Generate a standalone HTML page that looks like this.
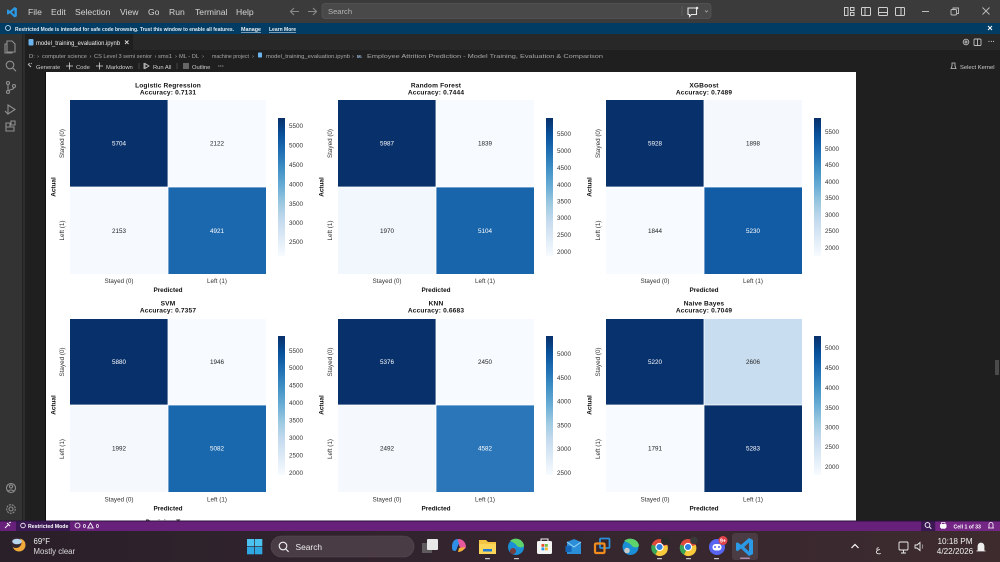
<!DOCTYPE html>
<html lang="en"><head><meta charset="utf-8"><title>model_training_evaluation.ipynb</title>
<style>
html,body{margin:0;padding:0;width:1000px;height:562px;overflow:hidden;background:#1f1f1f}
svg{display:block}
text{font-family:"Liberation Sans",sans-serif}
.t{font-size:6.6px;font-weight:700;fill:#111;text-anchor:middle;letter-spacing:.15px}
.l{font-size:6.3px;fill:#333;text-anchor:middle}
.b{font-size:6.4px;font-weight:700;fill:#111;text-anchor:middle}
.c{font-size:6.3px;fill:#333}
.w{font-size:6.3px;fill:#fff;text-anchor:middle}
.k{font-size:6.3px;fill:#222;text-anchor:middle}
.m{font-size:8.6px;fill:#d4d4d4}
.s{font-size:5.8px;fill:#cfcfcf}
.bc{font-size:5.9px;fill:#a9a9a9}
.ac{fill:none;stroke:#8a8a8a;stroke-width:1.1}
</style></head><body>
<svg width="1000" height="562" viewBox="0 0 1000 562" xmlns="http://www.w3.org/2000/svg">
<defs>
<linearGradient id="cb" x1="0" y1="0" x2="0" y2="1">
<stop offset="0" stop-color="#08306b"/><stop offset=".125" stop-color="#08519c"/><stop offset=".25" stop-color="#2171b5"/><stop offset=".375" stop-color="#4292c6"/><stop offset=".5" stop-color="#6baed6"/><stop offset=".625" stop-color="#9ecae1"/><stop offset=".75" stop-color="#c6dbef"/><stop offset=".875" stop-color="#deebf7"/><stop offset="1" stop-color="#f7fbff"/>
</linearGradient>
<linearGradient id="tb" x1="0" y1="0" x2="1" y2="0">
<stop offset="0" stop-color="#2a2029"/><stop offset=".45" stop-color="#33242e"/><stop offset="1" stop-color="#3d2b2e"/>
</linearGradient>
</defs>

<!-- base regions -->
<rect width="1000" height="562" fill="#1f1f1f"/>
<rect width="1000" height="23" fill="#3c3b3b"/>
<rect y="23" width="1000" height="11" fill="#003c64"/>
<rect y="34" width="1000" height="16" fill="#282828"/>
<rect x="23" y="34" width="110" height="16" fill="#1f1f1f"/>
<rect y="50" width="1000" height="22" fill="#1f1f1f"/>
<rect y="34" width="22" height="487" fill="#333333"/>
<rect x="22" y="34" width="1" height="487" fill="#222222"/>
<rect x="23" y="34" width="2" height="487" fill="#2d2d2d"/>
<rect x="45" y="72" width="1" height="449" fill="#0e0e0e"/>
<rect x="856" y="72" width="144" height="449" fill="#1f1f1f"/>
<rect x="46" y="72" width="810" height="449" fill="#ffffff"/>
<rect x="995" y="360" width="4" height="15" fill="#4a4a4a"/>

<!-- title bar -->
<g transform="translate(7 7) scale(.58) translate(-736 -538)">
<path d="M749 538l4 2v14l-4 2-8-7.500-3.500 2.700-1.500-1v-7l1.500-1 3.500 2.700z" fill="#2b9ae6"/><path d="M749 542.500l-4.800 4.500 4.800 4.500z" fill="#3c3b3b"/>
</g>
<text x="28" y="15" class="m">File</text>
<text x="51" y="15" class="m">Edit</text>
<text x="75" y="15" class="m">Selection</text>
<text x="120" y="15" class="m">View</text>
<text x="148" y="15" class="m">Go</text>
<text x="169" y="15" class="m">Run</text>
<text x="195" y="15" class="m">Terminal</text>
<text x="236" y="15" class="m">Help</text>
<path d="M299 11.500h-8m3-3.500l-3.500 3.500 3.500 3.500" class="ac"/>
<path d="M308 11.500h8m-3-3.500l3.500 3.500-3.500 3.500" class="ac"/>
<rect x="322" y="3.500" width="389" height="15" rx="3" fill="#494949" stroke="#575757" stroke-width=".7"/>
<text x="328" y="14" fill="#b5b5b5" style="font-size:7.600px">Search</text>
<path d="M682 6v10" stroke="#666" stroke-width=".7"/>
<path d="M688 8h8.500v6.500h-5l-2 2v-2h-1.500z" fill="none" stroke="#e8e8e8" stroke-width="1.100"/>
<circle cx="697" cy="8" r="1.300" fill="#e8e8e8"/>
<path d="M705 10.500l1.500 1.500 1.500-1.500" fill="none" stroke="#aaa" stroke-width=".8"/>
<g fill="none" stroke="#cfcfcf" stroke-width="1">
<rect x="844.500" y="7.500" width="3.500" height="8"/><rect x="850.500" y="7.500" width="3.500" height="3"/><rect x="850.500" y="12.500" width="3.500" height="3"/>
<rect x="861.500" y="7.500" width="9" height="8" rx="1"/><path d="M865 7.500v8"/>
<rect x="878.500" y="7.500" width="9" height="8" rx="1"/><path d="M878.500 12.500h9"/>
<rect x="895.500" y="7.500" width="9" height="8" rx="1"/><path d="M901 7.500v8"/>
</g>
<path d="M922 11.500h7" stroke="#cfcfcf" stroke-width=".9"/>
<g fill="none" stroke="#bdbdbd" stroke-width=".9"><rect x="951" y="9.500" width="5.500" height="5.500" rx="1"/><path d="M953 9.500v-1.500h5.500v5.500h-2"/></g>
<path d="M982.500 7.500l7 7m0-7l-7 7" stroke="#bdbdbd" stroke-width=".9"/>

<!-- restricted banner -->
<circle cx="8" cy="28" r="2.500" fill="none" stroke="#dbe9f4" stroke-width=".8"/>
<text x="15" y="31" fill="#dfe8ef" textLength="219" lengthAdjust="spacingAndGlyphs" style="font-size:5.300px;font-weight:700">Restricted Mode is intended for safe code browsing. Trust this window to enable all features.</text>
<text x="241" y="31" fill="#e8eef3" textLength="20" lengthAdjust="spacingAndGlyphs" style="font-size:5.300px;font-weight:700;text-decoration:underline">Manage</text>
<text x="269" y="31" fill="#e8eef3" textLength="27" lengthAdjust="spacingAndGlyphs" style="font-size:5.300px;font-weight:700;text-decoration:underline">Learn More</text>
<path d="M988 26l4 4m0-4l-4 4" stroke="#fff" stroke-width="1"/>

<!-- tab row -->
<rect x="28.500" y="39" width="5" height="6.500" rx="1" fill="#6cb4ee"/>
<text x="36" y="45" fill="#ececec" textLength="84" lengthAdjust="spacingAndGlyphs" style="font-size:6.300px">model_training_evaluation.ipynb</text>
<path d="M125 40.500l3.500 3.500m0-3.500l-3.500 3.500" stroke="#ddd" stroke-width=".9"/>
<g fill="none" stroke="#bfbfbf" stroke-width=".9">
<circle cx="966" cy="42" r="2.800"/><circle cx="966" cy="42" r="1"/>
<rect x="974" y="39" width="7" height="6.500" rx="1"/><path d="M977.500 39v6.500"/>
</g>
<text x="988" y="44" fill="#bfbfbf" style="font-size:7px;font-weight:700">···</text>

<!-- breadcrumb -->
<text x="29" y="58" class="bc">D:</text><text x="37" y="58" class="bc">›</text>
<text x="42" y="58" class="bc" textLength="45" lengthAdjust="spacingAndGlyphs">computer science</text><text x="89.500" y="58" class="bc">›</text>
<text x="94" y="58" class="bc" textLength="58" lengthAdjust="spacingAndGlyphs">CS Level 3 semi senior</text><text x="154.500" y="58" class="bc">›</text>
<text x="158" y="58" class="bc" textLength="14" lengthAdjust="spacingAndGlyphs">sms1</text><text x="175" y="58" class="bc">›</text>
<text x="179" y="58" class="bc" textLength="20" lengthAdjust="spacingAndGlyphs">ML - DL</text><text x="202" y="58" class="bc">›</text>
<text x="212" y="58" class="bc" textLength="37" lengthAdjust="spacingAndGlyphs">machine project</text><text x="252" y="58" class="bc">›</text>
<rect x="258" y="52.500" width="4" height="5" rx=".8" fill="#6cb4ee"/>
<text x="266" y="58" class="bc" textLength="84" lengthAdjust="spacingAndGlyphs">model_training_evaluation.ipynb</text><text x="352" y="58" class="bc">›</text>
<text x="357" y="58" fill="#9fc5e8" style="font-size:4.500px;font-weight:700">M↓</text>
<text x="367" y="58" class="bc" textLength="236" lengthAdjust="spacingAndGlyphs">Employee Attrition Prediction - Model Training, Evaluation &amp; Comparison</text>

<!-- notebook toolbar -->
<path d="M28 64l3 3m-2-4l.5 1m2-1l-.5 1" stroke="#c8c8c8" stroke-width=".9" fill="none"/>
<text x="36" y="69" class="s">Generate</text>
<path d="M66 66h7m-3.500-3.500v7" stroke="#ddd" stroke-width=".8"/>
<text x="76" y="69" class="s">Code</text>
<path d="M96 66h7m-3.500-3.500v7" stroke="#ddd" stroke-width=".8"/>
<text x="106" y="69" class="s">Markdown</text>
<path d="M139 63v6" stroke="#555" stroke-width=".7"/>
<path d="M145 63.500l4 2.500-4 2.500zM144 63v6" fill="none" stroke="#cfcfcf" stroke-width=".8"/>
<text x="153" y="69" class="s">Run All</text>
<path d="M177 63v6" stroke="#555" stroke-width=".7"/>
<path d="M183 64h6m-6 2h6m-6 2h6" stroke="#ddd" stroke-width=".8"/>
<text x="192" y="69" class="s">Outline</text>
<text x="218" y="68" fill="#ccc" style="font-size:6px;font-weight:700">···</text>
<path d="M952 63h3v3l1 2.500h-5l1-2.500z" fill="none" stroke="#c8c8c8" stroke-width=".8"/>
<text x="960" y="69" class="s">Select Kernel</text>

<!-- activity bar -->
<g fill="none" stroke="#8f8f8f" stroke-width="1.100">
<path d="M7 41h5l3 3v8H7zM7 44H5v9h7v-1"/>
<circle cx="10" cy="65" r="3.800"/><path d="M12.800 68l3.200 3.200"/>
<circle cx="8" cy="83" r="1.500"/><circle cx="8" cy="92" r="1.500"/><circle cx="14" cy="86" r="1.500"/><path d="M8 84.500v6M14 87.500c0 2-3 2-6 3"/>
<path d="M8 105l7 4.500-7 4.500zM5 111l3 3"/>
<path d="M6 123h4v4h4v4H6zM10 127H6M11 121h4v4h-4z"/>
<circle cx="11" cy="488" r="4.500"/><circle cx="11" cy="486.500" r="1.600"/><path d="M8 491.500c1-2 5-2 6 0"/>
<circle cx="11" cy="509" r="2"/><circle cx="11" cy="509" r="4.300" stroke-dasharray="2 1"/>
</g>

<!-- page content -->
<g>
<!-- Logistic Regression -->
<g>
<text class="t" x="168" y="87.500">Logistic Regression</text><text class="t" x="168" y="94.500">Accuracy: 0.7131</text>
<rect x="70" y="100" width="98" height="87" fill="#08306b"/><rect x="168" y="100" width="98" height="87" fill="#f7fbff"/>
<rect x="70" y="187" width="98" height="87" fill="#f6faff"/><rect x="168" y="187" width="98" height="87" fill="#1c68ae"/>
<path d="M70 187h196M168 100v174" stroke="#fff" stroke-width=".8"/>
<text class="w" x="119" y="145.500">5704</text><text class="k" x="217" y="145.500">2122</text><text class="k" x="119" y="233">2153</text><text class="w" x="217" y="233">4921</text>
<text class="l" x="119" y="283">Stayed (0)</text><text class="l" x="217" y="283">Left (1)</text>
<text class="b" x="168" y="292">Predicted</text>
<text class="l" transform="translate(64 143.500) rotate(-90)">Stayed (0)</text><text class="l" transform="translate(64 230.500) rotate(-90)">Left (1)</text>
<text class="b" transform="translate(55.500 187) rotate(-90)">Actual</text>
<rect x="278" y="118" width="7" height="138" fill="url(#cb)"/>
<text class="c" x="289" y="128">5500</text><text class="c" x="289" y="147.500">5000</text><text class="c" x="289" y="167">4500</text><text class="c" x="289" y="186.500">4000</text><text class="c" x="289" y="206">3500</text><text class="c" x="289" y="225">3000</text><text class="c" x="289" y="244">2500</text>
</g>
<!-- Random Forest -->
<g>
<text class="t" x="436" y="87.500">Random Forest</text><text class="t" x="436" y="94.500">Accuracy: 0.7444</text>
<rect x="338" y="100" width="98" height="87" fill="#08306b"/><rect x="436" y="100" width="98" height="87" fill="#f7fbff"/>
<rect x="338" y="187" width="98" height="87" fill="#f2f7fd"/><rect x="436" y="187" width="98" height="87" fill="#1865ac"/>
<path d="M338 187h196M436 100v174" stroke="#fff" stroke-width=".8"/>
<text class="w" x="387" y="145.500">5987</text><text class="k" x="485" y="145.500">1839</text><text class="k" x="387" y="233">1970</text><text class="w" x="485" y="233">5104</text>
<text class="l" x="387" y="283">Stayed (0)</text><text class="l" x="485" y="283">Left (1)</text>
<text class="b" x="436" y="292">Predicted</text>
<text class="l" transform="translate(332 143.500) rotate(-90)">Stayed (0)</text><text class="l" transform="translate(332 230.500) rotate(-90)">Left (1)</text>
<text class="b" transform="translate(323.500 187) rotate(-90)">Actual</text>
<rect x="546" y="118" width="7" height="138" fill="url(#cb)"/>
<text class="c" x="557" y="136">5500</text><text class="c" x="557" y="153">5000</text><text class="c" x="557" y="170">4500</text><text class="c" x="557" y="187">4000</text><text class="c" x="557" y="203.500">3500</text><text class="c" x="557" y="220">3000</text><text class="c" x="557" y="237">2500</text><text class="c" x="557" y="254">2000</text>
</g>
<!-- XGBoost -->
<g>
<text class="t" x="704" y="87.500">XGBoost</text><text class="t" x="704" y="94.500">Accuracy: 0.7489</text>
<rect x="606" y="100" width="98" height="87" fill="#08306b"/><rect x="704" y="100" width="98" height="87" fill="#f5f9fe"/>
<rect x="606" y="187" width="98" height="87" fill="#f7fbff"/><rect x="704" y="187" width="98" height="87" fill="#115ca5"/>
<path d="M606 187h196M704 100v174" stroke="#fff" stroke-width=".8"/>
<text class="w" x="655" y="145.500">5928</text><text class="k" x="753" y="145.500">1898</text><text class="k" x="655" y="233">1844</text><text class="w" x="753" y="233">5230</text>
<text class="l" x="655" y="283">Stayed (0)</text><text class="l" x="753" y="283">Left (1)</text>
<text class="b" x="704" y="292">Predicted</text>
<text class="l" transform="translate(600 143.500) rotate(-90)">Stayed (0)</text><text class="l" transform="translate(600 230.500) rotate(-90)">Left (1)</text>
<text class="b" transform="translate(591.500 187) rotate(-90)">Actual</text>
<rect x="814" y="118" width="7" height="138" fill="url(#cb)"/>
<text class="c" x="825" y="134">5500</text><text class="c" x="825" y="151">5000</text><text class="c" x="825" y="167">4500</text><text class="c" x="825" y="184">4000</text><text class="c" x="825" y="200">3500</text><text class="c" x="825" y="217">3000</text><text class="c" x="825" y="233">2500</text><text class="c" x="825" y="250">2000</text>
</g>
<!-- SVM -->
<g>
<text class="t" x="168" y="305.500">SVM</text><text class="t" x="168" y="312.500">Accuracy: 0.7357</text>
<rect x="70" y="319" width="98" height="86" fill="#08306b"/><rect x="168" y="319" width="98" height="86" fill="#f7fbff"/>
<rect x="70" y="405" width="98" height="87" fill="#f5f9fe"/><rect x="168" y="405" width="98" height="87" fill="#1967ad"/>
<path d="M70 405h196M168 319v173" stroke="#fff" stroke-width=".8"/>
<text class="w" x="119" y="364">5880</text><text class="k" x="217" y="364">1946</text><text class="k" x="119" y="450.500">1992</text><text class="w" x="217" y="450.500">5082</text>
<text class="l" x="119" y="501.500">Stayed (0)</text><text class="l" x="217" y="501.500">Left (1)</text>
<text class="b" x="168" y="510.500">Predicted</text>
<text class="l" transform="translate(64 362) rotate(-90)">Stayed (0)</text><text class="l" transform="translate(64 449) rotate(-90)">Left (1)</text>
<text class="b" transform="translate(55.500 405) rotate(-90)">Actual</text>
<rect x="278" y="336" width="7" height="139" fill="url(#cb)"/>
<text class="c" x="289" y="353">5500</text><text class="c" x="289" y="370">5000</text><text class="c" x="289" y="387.500">4500</text><text class="c" x="289" y="405">4000</text><text class="c" x="289" y="422.500">3500</text><text class="c" x="289" y="440">3000</text><text class="c" x="289" y="457.500">2500</text><text class="c" x="289" y="475">2000</text>
</g>
<!-- KNN -->
<g>
<text class="t" x="436" y="305.500">KNN</text><text class="t" x="436" y="312.500">Accuracy: 0.6683</text>
<rect x="338" y="319" width="98" height="86" fill="#08306b"/><rect x="436" y="319" width="98" height="86" fill="#f7fbff"/>
<rect x="338" y="405" width="98" height="87" fill="#f5f9fe"/><rect x="436" y="405" width="98" height="87" fill="#2b76b8"/>
<path d="M338 405h196M436 319v173" stroke="#fff" stroke-width=".8"/>
<text class="w" x="387" y="364">5376</text><text class="k" x="485" y="364">2450</text><text class="k" x="387" y="450.500">2492</text><text class="w" x="485" y="450.500">4582</text>
<text class="l" x="387" y="501.500">Stayed (0)</text><text class="l" x="485" y="501.500">Left (1)</text>
<text class="b" x="436" y="510.500">Predicted</text>
<text class="l" transform="translate(332 362) rotate(-90)">Stayed (0)</text><text class="l" transform="translate(332 449) rotate(-90)">Left (1)</text>
<text class="b" transform="translate(323.500 405) rotate(-90)">Actual</text>
<rect x="546" y="336" width="7" height="139" fill="url(#cb)"/>
<text class="c" x="557" y="356">5000</text><text class="c" x="557" y="380">4500</text><text class="c" x="557" y="403.500">4000</text><text class="c" x="557" y="427.500">3500</text><text class="c" x="557" y="451">3000</text><text class="c" x="557" y="475">2500</text>
</g>
<!-- Naive Bayes -->
<g>
<text class="t" x="704" y="305.500">Naive Bayes</text><text class="t" x="704" y="312.500">Accuracy: 0.7049</text>
<rect x="606" y="319" width="98" height="86" fill="#08326e"/><rect x="704" y="319" width="98" height="86" fill="#c9ddf0"/>
<rect x="606" y="405" width="98" height="87" fill="#f7fbff"/><rect x="704" y="405" width="98" height="87" fill="#08306b"/>
<path d="M606 405h196M704 319v173" stroke="#fff" stroke-width=".8"/>
<text class="w" x="655" y="364">5220</text><text class="k" x="753" y="364">2606</text><text class="k" x="655" y="450.500">1791</text><text class="w" x="753" y="450.500">5283</text>
<text class="l" x="655" y="501.500">Stayed (0)</text><text class="l" x="753" y="501.500">Left (1)</text>
<text class="b" x="704" y="510.500">Predicted</text>
<text class="l" transform="translate(600 362) rotate(-90)">Stayed (0)</text><text class="l" transform="translate(600 449) rotate(-90)">Left (1)</text>
<text class="b" transform="translate(591.500 405) rotate(-90)">Actual</text>
<rect x="814" y="336" width="7" height="139" fill="url(#cb)"/>
<text class="c" x="825" y="350">5000</text><text class="c" x="825" y="370">4500</text><text class="c" x="825" y="390">4000</text><text class="c" x="825" y="410">3500</text><text class="c" x="825" y="429.500">3000</text><text class="c" x="825" y="449">2500</text><text class="c" x="825" y="469">2000</text>
</g>
<text class="t" x="168" y="524">Decision Tree</text>
</g>

<!-- status bar -->
<rect y="521" width="1000" height="10" fill="#68217a"/>
<rect y="520.500" width="1000" height="1" fill="#2a1238"/>
<path d="M5 528l4-4m-2-1l3 3m-1-3l2-1" stroke="#fff" stroke-width=".9" fill="none"/>
<rect x="16" y="521.500" width="54" height="9.500" fill="#3b1854"/>
<circle cx="23" cy="525.500" r="2.300" fill="none" stroke="#fff" stroke-width=".8"/>
<text x="28" y="528" fill="#fff" style="font-size:5.200px;font-weight:700">Restricted Mode</text>
<circle cx="77.500" cy="525.500" r="2.500" fill="none" stroke="#fff" stroke-width=".8"/>
<text x="83" y="528" fill="#fff" style="font-size:5.200px;font-weight:700">0</text>
<path d="M90.500 523l2.800 5h-5.600z" fill="none" stroke="#fff" stroke-width=".8"/>
<text x="96" y="528" fill="#fff" style="font-size:5.200px;font-weight:700">0</text>
<rect x="921" y="521.500" width="14" height="9.500" fill="#3b1854"/>
<circle cx="927.500" cy="525" r="2.400" fill="none" stroke="#fff" stroke-width=".9"/><path d="M929.500 527l1.800 1.800" stroke="#fff" stroke-width=".9"/>
<rect x="936" y="521.500" width="64" height="9.500" fill="#742685"/>
<rect x="940" y="524" width="6.500" height="4" rx="1" fill="#fff"/><rect x="941.500" y="522.500" width="3.500" height="6" fill="none" stroke="#fff" stroke-width=".7"/>
<text x="953.500" y="528.500" fill="#fff" style="font-size:5.200px;font-weight:700">Cell 1 of 33</text>
<path d="M989 528v-3.500a2 2 0 0 1 4 0v3.500zM988 528h6" fill="none" stroke="#fff" stroke-width=".8"/>

<!-- taskbar -->
<rect y="531" width="1000" height="31" fill="url(#tb)"/>
<circle cx="19" cy="545" r="6.500" fill="#f0a93a"/><circle cx="16" cy="542.500" r="5.500" fill="#332530"/>
<ellipse cx="17" cy="541.500" rx="4.800" ry="2.800" fill="#b9d5ee"/>
<text x="33.500" y="544" fill="#f0f0f0" style="font-size:7.800px">69°F</text>
<text x="33.500" y="554" fill="#dcdcdc" style="font-size:7.800px">Mostly clear</text>

<rect x="247" y="539" width="7.300" height="7.300" fill="#4cc2f1"/><rect x="255" y="539" width="7.300" height="7.300" fill="#4cc2f1"/><rect x="247" y="547" width="7.300" height="7.300" fill="#2fa7e2"/><rect x="255" y="547" width="7.300" height="7.300" fill="#2fa7e2"/>
<rect x="271" y="536" width="143" height="21" rx="10.500" fill="#4a3c45" stroke="#5a4c54" stroke-width=".6"/>
<circle cx="283" cy="546" r="3.800" fill="none" stroke="#f2f2f2" stroke-width="1.100"/><path d="M285.800 549l2.800 2.800" stroke="#f2f2f2" stroke-width="1.100"/>
<text x="295.500" y="550" fill="#eeeeee" style="font-size:8.400px">Search</text>

<rect x="422" y="543" width="10" height="10" fill="#5f5a5e"/><rect x="427" y="539" width="11" height="11" rx="1" fill="#e8e8e8"/>
<path d="M452 547c0-6 3-8 6-8s3 3 1 5-2 7-4 7-3-1-3-4z" fill="#2f8fe8"/><path d="M458 539c4 0 7 2 8 7 0 3-2 4-4 3s-3-3-3-5-2-4-1-5z" fill="#e8589e"/><path d="M458 552c2 0 6-1 7-5l-6 1z" fill="#f4b13b"/>
<path d="M479 540h7l2 2h8v12h-17z" fill="#f4c543"/><rect x="479" y="544" width="17" height="10" fill="#fbd65a"/><rect x="483" y="549" width="9" height="2.500" fill="#1f7bd6"/>
<rect x="485" y="558" width="5" height="1.300" rx=".6" fill="#c8c8c8"/>

<circle cx="516" cy="547" r="8" fill="#1a8fd6"/><path d="M510 541c4-4 12-3 14 4 0 3-5 3-7 1-1-2-4-4-7-5z" fill="#5fd36b"/><circle cx="513" cy="551" r="3" fill="#7a3b3b"/>
<rect x="514" y="558" width="5" height="1.300" rx=".6" fill="#c8c8c8"/>
<rect x="537" y="541" width="15" height="13" rx="1.500" fill="#f4f4f4"/><path d="M541 541v-2h7v2" fill="none" stroke="#f4f4f4"/><rect x="541.500" y="544" width="2.800" height="2.800" fill="#e8502e"/><rect x="545" y="544" width="2.800" height="2.800" fill="#6fc040"/><rect x="541.500" y="547.500" width="2.800" height="2.800" fill="#2a9be8"/><rect x="545" y="547.500" width="2.800" height="2.800" fill="#f4b82c"/>
<path d="M567 542l7-3 7 3v12h-14z" fill="#2a8fd8"/><path d="M567 542l7 5 7-5" fill="none" stroke="#9ad4f5" stroke-width="1"/><rect x="565.500" y="546" width="6" height="6" fill="#1565b8"/>
<rect x="600" y="538.500" width="9.500" height="9.500" rx="1" fill="none" stroke="#2a8fd8" stroke-width="1.800"/><rect x="595" y="543.500" width="9.500" height="9.500" rx="1" fill="none" stroke="#f08c1e" stroke-width="2.200"/>
<circle cx="630.500" cy="547" r="8" fill="#1a8fd6"/><path d="M624 541c4-4 13-3 15 4 0 3-5 3-7 1-1-2-5-4-8-5z" fill="#5fd36b"/><circle cx="627" cy="550.500" r="2.800" fill="#c9c9c9"/>
<circle cx="659.500" cy="547" r="8" fill="#e04a3a"/><path d="M659.500 547l-4 7.800a8 8 0 0 1-3.700-10z" fill="#3aa757"/><path d="M659.500 547l7.800-2a8 8 0 0 1-11.800 9.800z" fill="#f8c93a"/><circle cx="659.500" cy="547" r="3.600" fill="#2f7de1" stroke="#fff" stroke-width="1.100"/><circle cx="665" cy="541" r="4" fill="#2b2b2b"/>
<circle cx="688" cy="547" r="8" fill="#e04a3a"/><path d="M688 547l-4 7.800a8 8 0 0 1-3.700-10z" fill="#3aa757"/><path d="M688 547l7.800-2a8 8 0 0 1-11.800 9.800z" fill="#f8c93a"/><circle cx="688" cy="547" r="3.600" fill="#2f7de1" stroke="#fff" stroke-width="1.100"/><circle cx="694" cy="540.500" r="3.800" fill="#3a3a3a"/>
<circle cx="717" cy="547" r="8" fill="#5865f2"/><rect x="712.500" y="544" width="9" height="6.500" rx="3" fill="#fff"/><circle cx="715" cy="547" r="1" fill="#5865f2"/><circle cx="719" cy="547" r="1" fill="#5865f2"/>
<circle cx="723" cy="540.500" r="4.500" fill="#e0424a"/><text x="723" y="542.500" text-anchor="middle" fill="#fff" style="font-size:5.200px;font-weight:700">9+</text>
<rect x="657" y="558" width="5" height="1.300" rx=".6" fill="#c8c8c8"/><rect x="686" y="558" width="5" height="1.300" rx=".6" fill="#c8c8c8"/><rect x="714" y="558" width="5" height="1.300" rx=".6" fill="#c8c8c8"/>
<rect x="732" y="533" width="26" height="27" rx="3" fill="#4a3c42"/>
<path d="M749 538l4 2v14l-4 2-8-7.500-3.500 2.700-1.500-1v-7l1.500-1 3.500 2.700z" fill="#2b9ae6"/><path d="M749 542.500l-4.800 4.500 4.800 4.500z" fill="#4a3c42"/>
<rect x="740" y="557.500" width="10" height="1.500" rx=".7" fill="#b08bb0"/>

<path d="M851.500 548l3.500-3.500 3.500 3.500" fill="none" stroke="#fff" stroke-width="1.200"/>
<text x="875.500" y="552" fill="#f0f0f0" style="font-size:9px">ع</text>
<rect x="899" y="542" width="9" height="8" rx="1" fill="none" stroke="#f0f0f0" stroke-width=".9"/><path d="M901 553h5M903.500 550v3" stroke="#f0f0f0" stroke-width=".9"/>
<path d="M915 545h2l3-2.500v8l-3-2.500h-2z" fill="none" stroke="#eee" stroke-width=".9"/><path d="M922 544.500c1 1 1 3 0 4" fill="none" stroke="#aaa" stroke-width=".8"/>
<text x="955" y="544" text-anchor="middle" fill="#f0f0f0" style="font-size:8.200px">10:18 PM</text>
<text x="955" y="554" text-anchor="middle" fill="#f0f0f0" style="font-size:8.200px">4/22/2026</text>
<path d="M978 551v-5a3 3 0 0 1 6 0v5zM976.500 551h9" fill="#eee" stroke="#eee" stroke-width=".8"/>
</svg>
</body></html>
